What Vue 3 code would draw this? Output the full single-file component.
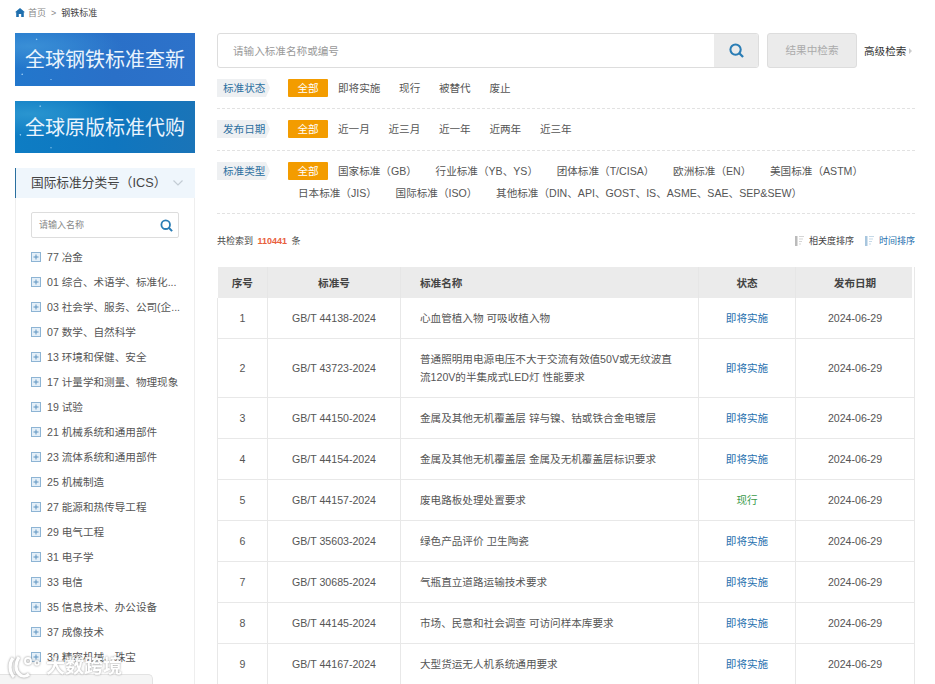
<script setup>
const icsList = ['77 冶金','01 综合、术语学、标准化...','03 社会学、服务、公司(企...','07 数学、自然科学','13 环境和保健、安全','17 计量学和测量、物理现象','19 试验','21 机械系统和通用部件','23 流体系统和通用部件','25 机械制造','27 能源和热传导工程','29 电气工程','31 电子学','33 电信','35 信息技术、办公设备','37 成像技术','39 精密机械、珠宝']
const filters = [
  { label: '标准状态', cls: 'f1', items: ['即将实施','现行','被替代','废止'] },
  { label: '发布日期', cls: 'f2', items: ['近一月','近三月','近一年','近两年','近三年'] },
  { label: '标准类型', cls: 'f3', items: ['国家标准（GB）','行业标准（YB、YS）','团体标准（T/CISA）','欧洲标准（EN）','美国标准（ASTM）','日本标准（JIS）','国际标准（ISO）','其他标准（DIN、API、GOST、IS、ASME、SAE、SEP&SEW）'] },
]
const rows = [
  ['1','GB/T 44138-2024','心血管植入物 可吸收植入物','即将实施'],
  ['2','GB/T 43723-2024','普通照明用电源电压不大于交流有效值50V或无纹波直流120V的半集成式LED灯 性能要求','即将实施'],
  ['3','GB/T 44150-2024','金属及其他无机覆盖层 锌与镍、钴或铁合金电镀层','即将实施'],
  ['4','GB/T 44154-2024','金属及其他无机覆盖层 金属及无机覆盖层标识要求','即将实施'],
  ['5','GB/T 44157-2024','废电路板处理处置要求','现行'],
  ['6','GB/T 35603-2024','绿色产品评价 卫生陶瓷','即将实施'],
  ['7','GB/T 30685-2024','气瓶直立道路运输技术要求','即将实施'],
  ['8','GB/T 44145-2024','市场、民意和社会调查 可访问样本库要求','即将实施'],
  ['9','GB/T 44167-2024','大型货运无人机系统通用要求','即将实施'],
]
</script>

<template>
  <div class="page">
    <div class="crumb">
      <svg class="home" width="10" height="9" viewBox="0 0 10 9"><path d="M5 0 0 4.300h1.200V9h2.600V6h2.400v3h2.600V4.300H10z" fill="#1f6fae"/></svg>
      <span class="c1">首页</span><span class="gt">&gt;</span><span class="c2">钢铁标准</span>
    </div>
    <div class="layout">
      <aside class="side">
        <div class="banner b1">全球钢铁标准查新</div>
        <div class="banner b2">全球原版标准代购</div>
        <div class="ics-head">
          <span>国际标准分类号（ICS）</span>
          <svg width="10" height="6" viewBox="0 0 10 6"><path d="M.5.5 5 5 9.500.5" fill="none" stroke="#c3ccd4" stroke-width="1.200"/></svg>
        </div>
        <div class="ics-body">
          <div class="ics-search">
            <span>请输入名称</span>
            <svg width="13" height="13" viewBox="0 0 13 13"><circle cx="5.700" cy="5.700" r="4.300" fill="none" stroke="#2a7db5" stroke-width="1.800"/><path d="m8.800 8.800 3.300 3.300" stroke="#2a7db5" stroke-width="2"/></svg>
          </div>
          <ul class="tree">
            <li v-for="t in icsList" :key="t">
              <svg width="10" height="10" viewBox="0 0 10 10"><rect x=".5" y=".5" width="9" height="9" fill="#e4eff8" stroke="#8db4d4"/><path d="M2.500 5h5M5 2.500v5" stroke="#5c93c0"/></svg>
              <span>{{ t }}</span>
            </li>
          </ul>
        </div>
      </aside>
      <main class="main">
        <div class="search-row">
          <div class="search">
            <div class="ph">请输入标准名称或编号</div>
            <div class="s-btn">
              <svg width="15" height="15" viewBox="0 0 16 16"><circle cx="7" cy="7" r="5.500" fill="none" stroke="#2a7db5" stroke-width="2.200"/><path d="m11 11 4 4" stroke="#2a7db5" stroke-width="2.400"/></svg>
            </div>
          </div>
          <div class="in-btn">结果中检索</div>
          <div class="adv">高级检索<i></i></div>
        </div>
        <div v-for="f in filters" :key="f.label" class="filter" :class="f.cls">
          <div class="f-label">{{ f.label }}</div>
          <div class="f-items">
            <span class="all">全部</span>
            <span v-for="it in f.items" :key="it" class="opt">{{ it }}</span>
          </div>
        </div>
        <div class="count-row">
          <div>共检索到 <b>110441</b> 条</div>
          <div class="sorts">
            <span class="sort">
              <svg width="10" height="10" viewBox="0 0 10 10"><path d="M1 0h2.500v10H1z" fill="#bbb"/><path d="M5 .5h5M5 3h4M5 5.500h3M5 8h2" stroke="#d5d5d5"/></svg>相关度排序
            </span>
            <span class="sort on">
              <svg width="10" height="10" viewBox="0 0 10 10"><path d="M1 0h2.500v10H1z" fill="#a8c6de"/><path d="M5 .5h5M5 3h4M5 5.500h3M5 8h2" stroke="#c5d9e8"/></svg>时间排序
            </span>
          </div>
        </div>
        <table class="tbl">
          <colgroup><col class="c-a"><col class="c-b"><col class="c-c"><col class="c-d"><col class="c-e"></colgroup>
          <thead>
            <tr><th>序号</th><th>标准号</th><th class="l">标准名称</th><th>状态</th><th>发布日期</th></tr>
          </thead>
          <tbody>
            <tr v-for="r in rows" :key="r[0]">
              <td>{{ r[0] }}</td>
              <td>{{ r[1] }}</td>
              <td class="l">{{ r[2] }}</td>
              <td :class="r[3] === '现行' ? 'green' : 'blue'">{{ r[3] }}</td>
              <td>2024-06-29</td>
            </tr>
          </tbody>
        </table>
      </main>
    </div>
    <div class="dock"></div>
    <div class="mark">
      <svg width="36" height="24" viewBox="0 0 36 24"><path d="M5 3C1 8 1 17 6 22M11 2C7 8 7 15 11 19c3 3 7 3 10 0" fill="none" stroke="#fff" stroke-width="3.200"/><circle cx="20" cy="6" r="3" fill="none" stroke="#fff" stroke-width="2"/><circle cx="29" cy="8" r="2" fill="none" stroke="#fff" stroke-width="1.500"/></svg>
      <span>大数跨境</span>
    </div>
  </div>
</template>

<style>
html, body { margin: 0; height: 684px; overflow: hidden; background: #fff; }
</style>

<style scoped>
.page {
  position: relative;
  width: 935px;
  height: 684px;
  overflow: hidden;
  font: 10.6px/18px "Liberation Sans", "Noto Sans CJK SC", sans-serif;
  color: #555;
}
.crumb { display: flex; align-items: center; height: 25px; padding-left: 15px; font-size: 9px; }
.home { margin-right: 3px; }
.c1 { color: #888; }
.gt { margin: 0 5px; color: #888; }
.c2 { color: #444; }
.layout { display: flex; padding: 8px 0 0 15px; }
.side { width: 180px; flex: none; }
.banner {
  display: flex;
  align-items: center;
  justify-content: center;
  color: #eaf4fd;
  font-size: 20px;
  margin-bottom: 15px;
  height: 53px;
  padding-top: 1px;
  box-sizing: border-box;
}
.b1 {
  background:
    radial-gradient(circle at 4% 78%, #b5e0ff 0, transparent 1.2px),
    radial-gradient(circle at 12% 12%, #a8d8f8 0, transparent 1.2px),
    radial-gradient(circle at 20% 88%, #a8d8f8 0, transparent 1px),
    radial-gradient(ellipse at 8% 25%, #3a8fd6 0, transparent 40%),
    linear-gradient(90deg, #2277cc, #2a70c8 55%, #2d72ca);
}
.b2 {
  height: 52px;
  background:
    radial-gradient(circle at 3% 65%, #b5e0ff 0, transparent 1.2px),
    radial-gradient(circle at 14% 10%, #a8d8f8 0, transparent 1.2px),
    radial-gradient(circle at 20% 90%, #a8d8f8 0, transparent 1px),
    radial-gradient(ellipse at 8% 25%, #2a95d0 0, transparent 40%),
    linear-gradient(90deg, #0e7dc4, #0f76bf 55%, #1a74b8);
}
.ics-head {
  display: flex;
  align-items: center;
  justify-content: space-between;
  height: 30px;
  box-sizing: border-box;
  padding: 0 12px 0 15px;
  background: #eff6fc;
  border-left: 1px solid #2a6f9f;
  font-size: 12.700px;
  color: #444;
  white-space: nowrap;
}
.ics-body { border: 1px solid #eee; border-width: 0 1px; padding: 14px 15px 0; height: 500px; }
.ics-search {
  display: flex;
  align-items: center;
  justify-content: space-between;
  box-sizing: border-box;
  width: 148px;
  height: 26px;
  padding: 0 5px 0 7px;
  border: 1px solid #ddd;
  border-radius: 2px;
  font-size: 9px;
  color: #888;
}
.tree { list-style: none; margin: 6px 0 0; padding: 0; }
.tree li { display: flex; align-items: center; gap: 6px; height: 25px; white-space: nowrap; color: #555; }
.tree svg { flex: none; }
.main { width: 698px; margin-left: 22px; flex: none; }
.search-row { display: flex; align-items: center; height: 35px; }
.search {
  display: flex;
  flex: none;
  justify-content: space-between;
  box-sizing: border-box;
  width: 542px;
  height: 35px;
  border: 1px solid #ddd;
  border-radius: 3px;
  overflow: hidden;
}
.ph { padding-left: 15px; line-height: 34px; color: #999; }
.s-btn { display: flex; align-items: center; justify-content: center; width: 44px; background: #ebebeb; }
.in-btn {
  flex: none;
  box-sizing: border-box;
  width: 90px;
  height: 35px;
  margin-left: 8px;
  border: 1px solid #ddd;
  border-radius: 3px;
  background: #ebebeb;
  color: #aaa;
  line-height: 33px;
  text-align: center;
}
.adv { display: flex; align-items: center; margin-left: 7px; color: #333; white-space: nowrap; }
.adv i { width: 0; height: 0; margin-left: 3px; border: 3px solid transparent; border-left-color: #ccc; border-right-width: 0; }
.filter { display: flex; align-items: flex-start; border-bottom: 1px dashed #e2e2e2; margin-top: 11px; padding-bottom: 11px; }
.f2 { padding-bottom: 12px; }
.f-label {
  position: relative;
  flex: none;
  width: 49px;
  height: 18px;
  padding-left: 6px;
  box-sizing: border-box;
  background: #eef0f2;
  color: #2c6f9f;
  white-space: nowrap;
}
.f-label::after {
  content: "";
  position: absolute;
  left: 100%;
  top: 0;
  border-left: 4px solid #eef0f2;
  border-top: 9px solid transparent;
  border-bottom: 9px solid transparent;
}
.f-items { display: flex; flex-wrap: wrap; margin-left: 22px; flex: 1; }
.all { width: 40px; height: 18px; background: #f39c00; color: #fff; text-align: center; border-radius: 1px; }
.opt { padding: 0 8.700px 0 10px; white-space: nowrap; }
.f3 .opt { margin-bottom: 4px; }
.f3 { padding-bottom: 7px; }
.count-row { display: flex; justify-content: space-between; align-items: center; margin-top: 18px; height: 18px; font-size: 9px; color: #444; }
.count-row b { color: #e8603c; margin: 0 2px; }
.sorts { display: flex; gap: 10px; }
.sort { display: flex; align-items: center; gap: 5px; }
.sort.on { color: #1f6fae; }
.tbl { margin-top: 17px; width: 697px; border-collapse: collapse; table-layout: fixed; }
.c-a { width: 50px; }
.c-b { width: 133px; }
.c-c { width: 298px; }
.c-d { width: 97px; }
.c-e { width: 119px; }
.tbl th { height: 31px; padding: 0; background: #ebebeb; font-weight: bold; color: #444; border-right: 1px solid #e6e6e6; }
.tbl th:last-child { background: linear-gradient(#ebebeb, #ebebeb) no-repeat left / calc(100% - 2px) 100%; border-right-color: #e8e8e8; }
.tbl td { height: 40px; padding: 0; text-align: center; border: 1px solid #e8e8e8; color: #555; }
.tbl tr:first-child td { border-top: 0; }
.tbl th.l { padding: 0 19px; text-align: left; }
.tbl td.l { padding: 11px 19px; box-sizing: border-box; text-align: left; }
.tbl td.blue { color: #1f6fae; }
.tbl td.green { color: #3a9a4a; }
.dock { position: absolute; left: 0; bottom: 0; width: 153px; height: 10px; background: #f5f5f5; border: 1px solid #e3e3e3; border-left: 0; border-bottom: 0; border-radius: 0 5px 0 0; box-sizing: border-box; }
.mark { position: absolute; left: 8px; top: 655px; display: flex; align-items: center; color: #fff; font-size: 19px; line-height: 24px; font-weight: bold; opacity: .9; text-shadow: 0 0 2px rgba(100,100,100,.8); }
.mark svg { filter: drop-shadow(0 0 1px rgba(100,100,100,.8)); }
.mark span { margin-left: 2px; }
</style>
